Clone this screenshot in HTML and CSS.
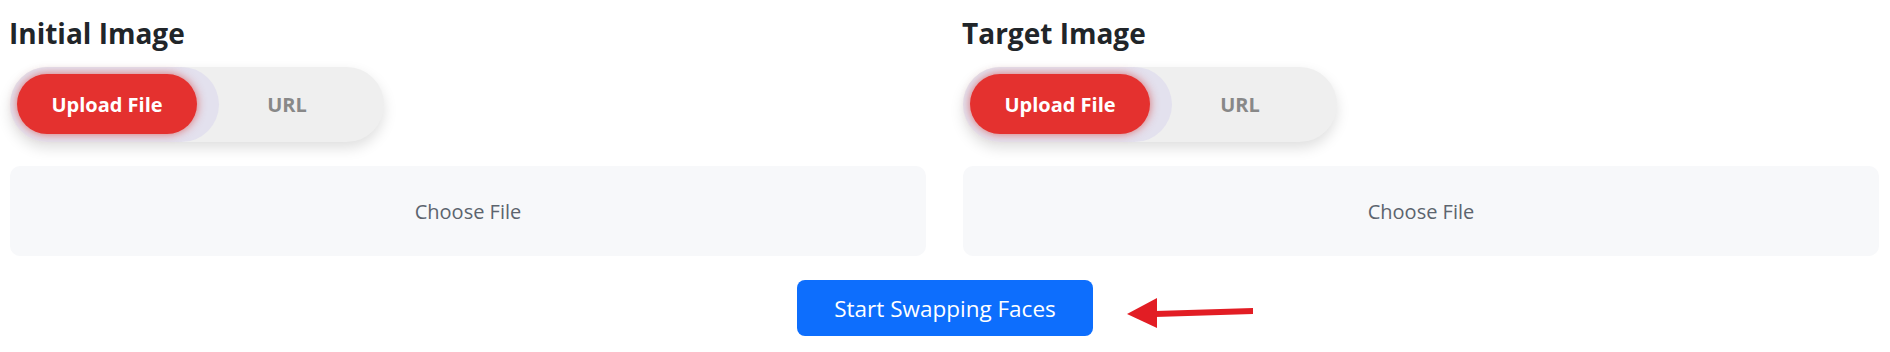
FILE: index.html
```html
<!DOCTYPE html>
<html lang="en">
<head>
  <meta charset="UTF-8">
  <meta name="viewport" content="width=device-width, initial-scale=1.0">
  <title>Face Swap</title>
  <link rel="stylesheet" href="styles.css">
</head>
<body>
  <div class="swap-container">
    <div class="image-row">
      <div class="image-col">
        <h3 class="image-title">Initial Image</h3>
        <div class="source-toggle">
          <button class="toggle-btn active">Upload File</button>
          <button class="toggle-btn">URL</button>
        </div>
        <label class="file-drop">Choose File</label>
      </div>
      <div class="image-col">
        <h3 class="image-title">Target Image</h3>
        <div class="source-toggle">
          <button class="toggle-btn active">Upload File</button>
          <button class="toggle-btn">URL</button>
        </div>
        <label class="file-drop">Choose File</label>
      </div>
    </div>
    <div class="action-row">
      <div class="action-wrap">
        <button class="swap-btn">Start Swapping Faces</button>
        <svg class="hint-arrow" width="130" height="34" viewBox="0 0 130 34">
          <polygon points="0,17 30,1 30,31" fill="#e21d24"/>
          <polygon points="28,14 126,11 126,17 28,20" fill="#e21d24"/>
        </svg>
      </div>
    </div>
  </div>
</body>
</html>
```

FILE: styles.css
```css
body {
  margin: 0;
  background: #fff;
  font-family: 'Open Sans', 'Noto Sans', Arial, sans-serif;
  color: #212529;
}
.swap-container {
  padding: 0 11px 0 10px;
}
.image-row {
  display: flex;
  gap: 37px;
}
.image-col {
  flex: 1;
  display: flex;
  flex-direction: column;
  align-items: flex-start;
}
.image-title {
  margin: 16px 0 0 -1px;
  font-size: 28px;
  line-height: 34px;
  font-weight: 700;
  color: #212529;
}
.source-toggle {
  position: relative;
  display: flex;
  margin-top: 17px;
  padding: 7px 7px 8px;
  background: #efefef;
  border-radius: 38px;
  box-shadow: 0 6px 14px rgba(0, 0, 0, 0.13);
}
.source-toggle::before {
  content: '';
  position: absolute;
  left: 0;
  top: 0;
  bottom: 0;
  width: 209px;
  background: #e3e1ee;
  border-radius: 38px;
}
.toggle-btn {
  position: relative;
  width: 180px;
  height: 60px;
  border: none;
  border-radius: 30px;
  background: transparent;
  font-family: inherit;
  font-size: 20px;
  font-weight: 700;
  color: #888;
}
.toggle-btn.active {
  background: #e4312f;
  color: #fff;
  box-shadow: 0 0 10px rgba(214, 60, 55, 0.7);
}
.file-drop {
  align-self: stretch;
  margin-top: 24px;
  height: 90px;
  display: flex;
  align-items: center;
  justify-content: center;
  background: #f7f8fa;
  border-radius: 10px;
  font-size: 20px;
  font-weight: 500;
  color: #5c646e;
}
.action-row {
  display: flex;
  justify-content: center;
  margin-top: 24px;
  padding-left: 1px;
}
.action-wrap {
  position: relative;
}
.swap-btn {
  width: 296px;
  height: 56px;
  border: none;
  border-radius: 8px;
  background: #0d6efd;
  color: #fff;
  font-family: inherit;
  font-size: 22.5px;
}
.hint-arrow {
  position: absolute;
  left: 330px;
  top: 17px;
}
```
